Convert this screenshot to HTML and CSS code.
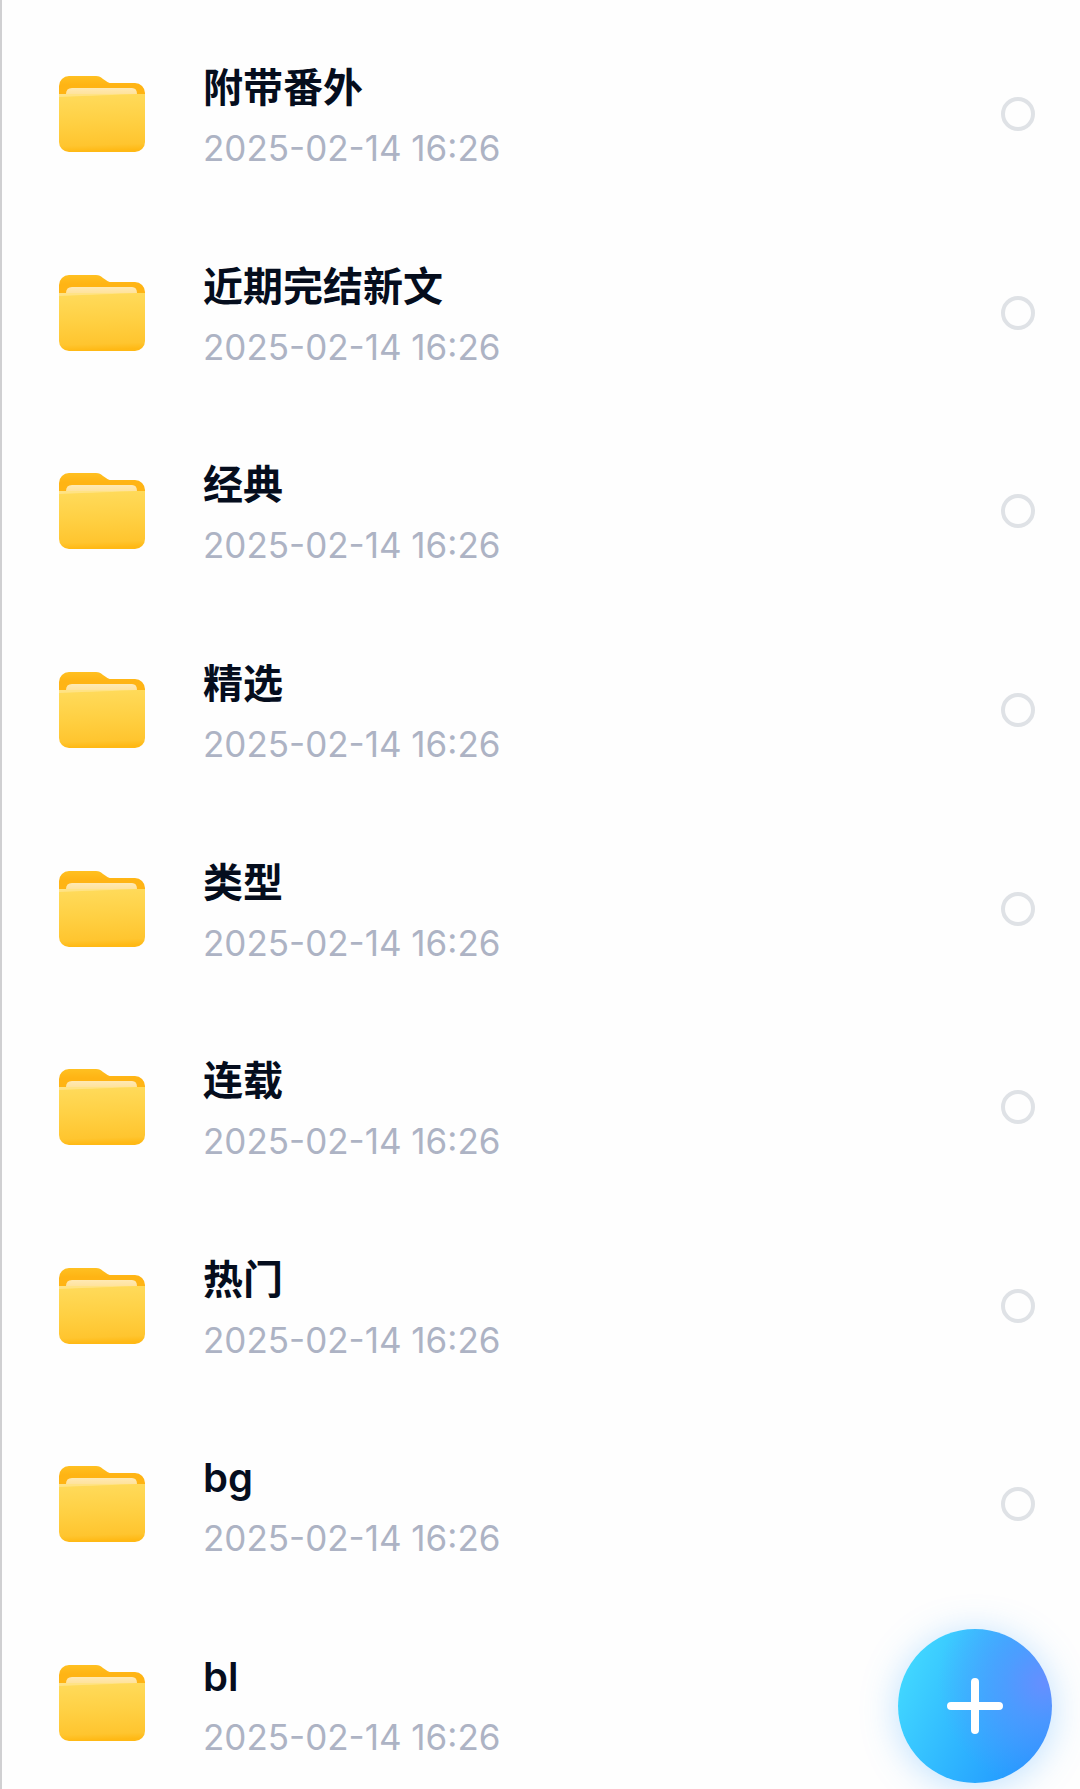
FILE: index.html
```
<!DOCTYPE html>
<html lang="zh-CN">
<head>
    <meta charset="UTF-8">
    <meta name="viewport" content="width=device-width, initial-scale=1.0">
    <title>文件</title>
    <link rel="stylesheet" href="styles.css">
</head>
<body>
    <!-- Shared folder icon -->
    <svg class="defs" width="0" height="0" aria-hidden="true">
        <defs>
            <linearGradient id="back" x1="0" y1="0" x2="0" y2="1">
                <stop offset="0" stop-color="#ffc021"/>
                <stop offset="0.3" stop-color="#ffb414"/>
            </linearGradient>
            <linearGradient id="paper" x1="0" y1="0" x2="0" y2="1">
                <stop offset="0" stop-color="#ffe9b4"/>
                <stop offset="1" stop-color="#ffdc85"/>
            </linearGradient>
            <linearGradient id="front" x1="0" y1="0" x2="0.05" y2="1">
                <stop offset="0" stop-color="#ffdb5c"/>
                <stop offset="0.5" stop-color="#ffd043"/>
                <stop offset="0.9" stop-color="#ffc52f"/>
                <stop offset="1" stop-color="#ffb915"/>
            </linearGradient>
        </defs>
        <symbol id="folder" viewBox="0 0 86 76">
            <path fill="url(#back)" d="M0 30V10a10 10 0 0 1 10-10h27c3 0 5 1 7 3l3 2c2 1.500 3 2 5 2h24a10 10 0 0 1 10 10v13z"/>
            <path fill="url(#paper)" d="M7 24v-6q0-6 6-6h60q5 0 5 6v6z"/>
            <path fill="url(#front)" d="M0 18h86v48a10 10 0 0 1-10 10H10a10 10 0 0 1-10-10z"/>
            <path fill="#ffe385" d="M0 18h78q-30 1-78 3z"/>
        </symbol>
    </svg>

    <ul class="file-list">
        <li>
            <label class="file">
                <svg class="folder" aria-hidden="true"><use href="#folder"/></svg>
                <span class="info"><span class="name">附带番外</span><time class="date">2025-02-14 16:26</time></span>
                <input class="check" type="checkbox">
            </label>
        </li>
        <li>
            <label class="file">
                <svg class="folder" aria-hidden="true"><use href="#folder"/></svg>
                <span class="info"><span class="name">近期完结新文</span><time class="date">2025-02-14 16:26</time></span>
                <input class="check" type="checkbox">
            </label>
        </li>
        <li>
            <label class="file">
                <svg class="folder" aria-hidden="true"><use href="#folder"/></svg>
                <span class="info"><span class="name">经典</span><time class="date">2025-02-14 16:26</time></span>
                <input class="check" type="checkbox">
            </label>
        </li>
        <li>
            <label class="file">
                <svg class="folder" aria-hidden="true"><use href="#folder"/></svg>
                <span class="info"><span class="name">精选</span><time class="date">2025-02-14 16:26</time></span>
                <input class="check" type="checkbox">
            </label>
        </li>
        <li>
            <label class="file">
                <svg class="folder" aria-hidden="true"><use href="#folder"/></svg>
                <span class="info"><span class="name">类型</span><time class="date">2025-02-14 16:26</time></span>
                <input class="check" type="checkbox">
            </label>
        </li>
        <li>
            <label class="file">
                <svg class="folder" aria-hidden="true"><use href="#folder"/></svg>
                <span class="info"><span class="name">连载</span><time class="date">2025-02-14 16:26</time></span>
                <input class="check" type="checkbox">
            </label>
        </li>
        <li>
            <label class="file">
                <svg class="folder" aria-hidden="true"><use href="#folder"/></svg>
                <span class="info"><span class="name">热门</span><time class="date">2025-02-14 16:26</time></span>
                <input class="check" type="checkbox">
            </label>
        </li>
        <li>
            <label class="file">
                <svg class="folder" aria-hidden="true"><use href="#folder"/></svg>
                <span class="info"><span class="name">bg</span><time class="date">2025-02-14 16:26</time></span>
                <input class="check" type="checkbox">
            </label>
        </li>
        <li>
            <label class="file">
                <svg class="folder" aria-hidden="true"><use href="#folder"/></svg>
                <span class="info"><span class="name">bl</span><time class="date">2025-02-14 16:26</time></span>
            </label>
        </li>
    </ul>

    <button class="add" type="button" aria-label="新建">
        <svg class="plus" viewBox="0 0 58 58" aria-hidden="true">
            <path d="M29 5v48M5 29h48"/>
        </svg>
    </button>
</body>
</html>
```

FILE: styles.css
```
* {
    box-sizing: border-box;
}
body {
    margin: 0;
    background-color: #fefefe;
    font-family: Inter, "Noto Sans CJK SC", sans-serif;
}
.defs {
    position: absolute;
}
.file-list {
    display: flex;
    flex-direction: column;
    justify-content: space-between;
    gap: 32px;
    min-height: 100vh;
    margin: 0;
    padding: 56px 45px 28px 57px;
    border-left: 2px solid #d0d0d2;
    list-style: none;
}
.file {
    display: flex;
    align-items: center;
}
.folder {
    flex: none;
    width: 86px;
    height: 76px;
    margin-right: 58px;
}
.info {
    display: flex;
    flex: 1;
    flex-direction: column;
    gap: 4px;
}
.name {
    color: #050d1d;
    font-size: 40px;
    font-weight: 600;
    line-height: 64px;
}
.date {
    color: #adb3c4;
    font-size: 35px;
    line-height: 48px;
}
.check {
    appearance: none;
    flex: none;
    width: 34px;
    height: 34px;
    margin: 0;
    border: 4px solid #dfe2e6;
    border-radius: 50%;
}
.check:checked {
    border-color: #2f9bff;
    background-color: #2f9bff;
}
.add {
    position: fixed;
    right: 28px;
    bottom: 6px;
    display: flex;
    align-items: center;
    justify-content: center;
    width: 154px;
    height: 154px;
    padding: 0;
    border: 0;
    border-radius: 50%;
    background: radial-gradient(circle at 95% 35%, #668fff 0%, rgba(90, 150, 255, 0.7) 22%, rgba(60, 165, 255, 0) 60%), linear-gradient(115deg, #42d8ff 10%, #2fb6ff 50%, #1f8fff 95%);
    box-shadow: 0 4px 36px rgba(70, 170, 255, 0.35);
}
.plus {
    width: 58px;
    height: 58px;
    fill: none;
    stroke: #fff;
    stroke-width: 8;
    stroke-linecap: round;
}
```
